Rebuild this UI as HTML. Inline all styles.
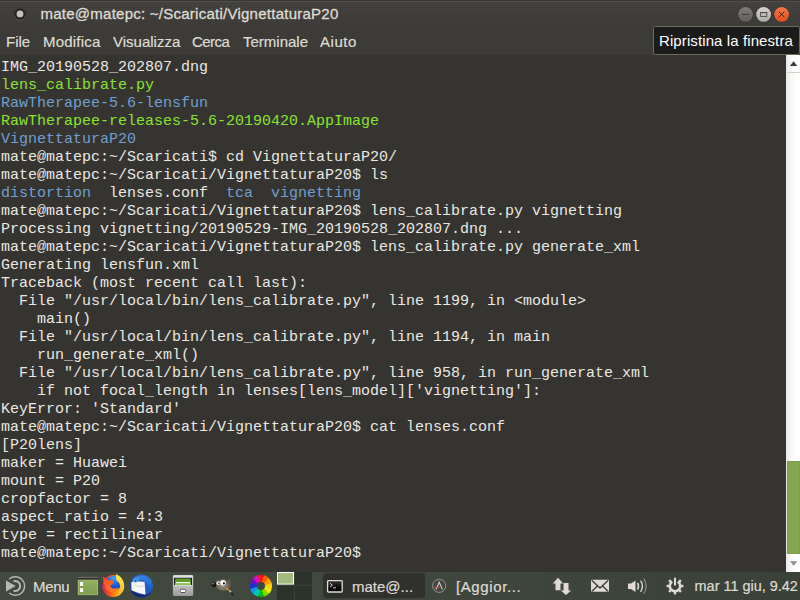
<!DOCTYPE html>
<html>
<head>
<meta charset="utf-8">
<title>mate@matepc: ~/Scaricati/VignettaturaP20</title>
<style>
html,body{margin:0;padding:0;}
body{width:800px;height:600px;overflow:hidden;position:relative;background:#353431;font-family:"Liberation Sans",sans-serif;}
.abs{position:absolute;}
#titlebar{left:0;top:0;width:800px;height:28px;background:linear-gradient(#393834 0,#393834 1px,#43423e 2px,#3c3b37 27px);}
#titlebar .topline{left:0;top:1px;width:800px;height:1px;background:#504f4a;}
#title{left:40.5px;top:5px;font-size:15px;letter-spacing:0.25px;-webkit-text-stroke:0.3px #dfdbd2;line-height:17px;color:#dfdbd2;white-space:nowrap;}
#menubar{left:0;top:28px;width:800px;height:27px;background:#3c3b37;}
.mi{top:33px;font-size:15px;line-height:17px;color:#dfdbd2;white-space:nowrap;-webkit-text-stroke:0.2px #dfdbd2;}
#term{left:0;top:55px;width:786px;height:517px;background:#353431;}
#text{left:1px;top:59px;margin:0;font-family:"Liberation Mono",monospace;font-size:15px;line-height:18px;color:#ebe8e2;white-space:pre;}
.g{color:#8ae234;}
.b{color:#729fcf;}
#scroll{left:786px;top:55px;width:14px;height:517px;background:linear-gradient(90deg,#e9e8e6,#f7f7f6 35%,#ffffff 75%);}
#thumb{left:787px;top:461px;width:13px;height:93px;background:#85a651;box-shadow:inset 0 0 0 1px #7c9d4a;}
#panel{left:0;top:572px;width:800px;height:28px;background:linear-gradient(#444c40,#3a4137);}
.pt{font-size:15px;line-height:17px;color:#dfdbd2;white-space:nowrap;-webkit-text-stroke:0.2px #dfdbd2;}
#tooltip{left:653px;top:26px;width:145px;height:27px;background:#1b1b1b;border:1px solid #706b5b;border-radius:2.5px;}
#tiptext{left:659px;top:32px;font-size:15px;letter-spacing:0.1px;line-height:17px;color:#ffffff;white-space:nowrap;}
</style>
</head>
<body>
<div id="titlebar" class="abs"><div class="abs topline"></div></div>
<svg class="abs" style="left:10px;top:4px" width="20" height="20" viewBox="10 4 20 20"><defs><radialGradient id="dotg"><stop offset="0.7" stop-color="#262522"/><stop offset="1" stop-color="#353430"/></radialGradient></defs><circle cx="20" cy="14.5" r="6.3" fill="#56554f"/><circle cx="20" cy="13.9" r="6.2" fill="url(#dotg)"/><circle cx="20" cy="13.9" r="3.4" fill="#c4c1ba"/></svg>
<div id="title" class="abs">mate@matepc: ~/Scaricati/VignettaturaP20</div>
<!-- window buttons -->
<svg class="abs" style="left:732px;top:0px" width="64" height="30" viewBox="732 0 64 30">
  <defs>
    <linearGradient id="gb" x1="0" y1="0" x2="0" y2="1"><stop offset="0" stop-color="#7f7e78"/><stop offset="1" stop-color="#5e5d58"/></linearGradient>
    <linearGradient id="gm" x1="0" y1="0" x2="0" y2="1"><stop offset="0" stop-color="#d6d5d2"/><stop offset="1" stop-color="#acaba6"/></linearGradient>
    <linearGradient id="gc" x1="0" y1="0" x2="0" y2="1"><stop offset="0" stop-color="#f27a4c"/><stop offset="1" stop-color="#dd4f1c"/></linearGradient>
  </defs>
  <circle cx="745.5" cy="14.5" r="8" fill="#353430"/>
  <circle cx="745.5" cy="14.4" r="7.4" fill="url(#gb)"/>
  <rect x="742" y="13.9" width="7" height="1" fill="#3d3c38"/>
  <circle cx="763.6" cy="14.5" r="8" fill="#353430"/>
  <circle cx="763.6" cy="14.4" r="7.4" fill="url(#gm)"/>
  <rect x="760.6" y="12.6" width="6.2" height="3.8" fill="none" stroke="#4b4a46" stroke-width="0.9"/>
  <rect x="760.2" y="12.1" width="7" height="1" fill="#4b4a46"/>
  <circle cx="781.6" cy="14.5" r="8" fill="#353430"/>
  <circle cx="781.6" cy="14.4" r="7.4" fill="url(#gc)"/>
  <path d="M778.8 11.6 L784.4 17.2 M784.4 11.6 L778.8 17.2" stroke="#4a2010" stroke-width="1"/>
</svg>
<div id="menubar" class="abs"></div>
<div class="abs mi" style="left:6px">File</div>
<div class="abs mi" style="left:43px;letter-spacing:0.2px">Modifica</div>
<div class="abs mi" style="left:113px">Visualizza</div>
<div class="abs mi" style="left:192px;letter-spacing:-0.55px">Cerca</div>
<div class="abs mi" style="left:243px">Terminale</div>
<div class="abs mi" style="left:320px;letter-spacing:0.55px">Aiuto</div>
<div id="term" class="abs"></div>
<pre id="text" class="abs">IMG_20190528_202807.dng
<span class="g">lens_calibrate.py</span>
<span class="b">RawTherapee-5.6-lensfun</span>
<span class="g">RawTherapee-releases-5.6-20190420.AppImage</span>
<span class="b">VignettaturaP20</span>
mate@matepc:~/Scaricati$ cd VignettaturaP20/
mate@matepc:~/Scaricati/VignettaturaP20$ ls
<span class="b">distortion</span>  lenses.conf  <span class="b">tca</span>  <span class="b">vignetting</span>
mate@matepc:~/Scaricati/VignettaturaP20$ lens_calibrate.py vignetting
Processing vignetting/20190529-IMG_20190528_202807.dng ...
mate@matepc:~/Scaricati/VignettaturaP20$ lens_calibrate.py generate_xml
Generating lensfun.xml
Traceback (most recent call last):
  File "/usr/local/bin/lens_calibrate.py", line 1199, in &lt;module&gt;
    main()
  File "/usr/local/bin/lens_calibrate.py", line 1194, in main
    run_generate_xml()
  File "/usr/local/bin/lens_calibrate.py", line 958, in run_generate_xml
    if not focal_length in lenses[lens_model]['vignetting']:
KeyError: 'Standard'
mate@matepc:~/Scaricati/VignettaturaP20$ cat lenses.conf
[P20lens]
maker = Huawei
mount = P20
cropfactor = 8
aspect_ratio = 4:3
type = rectilinear
mate@matepc:~/Scaricati/VignettaturaP20$ </pre>
<div id="scroll" class="abs"></div>
<div id="thumb" class="abs"></div>
<svg class="abs" style="left:786px;top:55px" width="14" height="517" viewBox="786 55 14 517">
  <path d="M793.6 61.2 L797.3 66 L789.9 66 Z" fill="#3c3c3c"/>
  <rect x="787" y="72" width="13" height="1" fill="#d4cfc9"/>
  <path d="M790 561.2 L797.3 561.2 L793.6 565.8 Z" fill="#8e8e8c"/>
</svg>
<svg class="abs" style="left:0;top:572px" width="800" height="28" viewBox="0 572 800 28">
  <defs>
    <linearGradient id="pgr" x1="0" y1="0" x2="1" y2="0"><stop offset="0" stop-color="#424a3f"/><stop offset="0.6" stop-color="#3f473c"/><stop offset="1" stop-color="#3a4138"/></linearGradient>
    <linearGradient id="cajag" x1="0" y1="0" x2="0" y2="1"><stop offset="0" stop-color="#93b061"/><stop offset="1" stop-color="#7f9d50"/></linearGradient>
    <linearGradient id="cabg" x1="0" y1="0" x2="0" y2="1"><stop offset="0" stop-color="#d0d0d0"/><stop offset="0.5" stop-color="#c0c0c0"/><stop offset="1" stop-color="#9a9a9a"/></linearGradient>
    <linearGradient id="ffg" x1="0" y1="0.45" x2="1" y2="0.55"><stop offset="0" stop-color="#e01c62"/><stop offset="0.28" stop-color="#fb3f2c"/><stop offset="0.6" stop-color="#ff8c14"/><stop offset="1" stop-color="#ffd22e"/></linearGradient>
    <linearGradient id="ffy" x1="0" y1="0" x2="0" y2="1"><stop offset="0" stop-color="#fff04a"/><stop offset="1" stop-color="#ffb11c"/></linearGradient>
    <radialGradient id="ffb" cx="0.5" cy="0.15" r="0.85"><stop offset="0" stop-color="#3aa4ff"/><stop offset="0.55" stop-color="#1f62e6"/><stop offset="1" stop-color="#1a2cc0"/></radialGradient>
    <linearGradient id="ffo" x1="0" y1="0" x2="1" y2="1"><stop offset="0" stop-color="#ff4a2a"/><stop offset="1" stop-color="#ff8a18"/></linearGradient>
    <linearGradient id="tbw" x1="0" y1="0" x2="1" y2="1"><stop offset="0" stop-color="#3d8ee2"/><stop offset="0.6" stop-color="#2a6fd2"/><stop offset="1" stop-color="#173f9c"/></linearGradient>
    <linearGradient id="tbg" x1="0" y1="1" x2="1" y2="0"><stop offset="0" stop-color="#101f66"/><stop offset="0.5" stop-color="#1f55bf"/><stop offset="1" stop-color="#2f7bd8"/></linearGradient>
    <linearGradient id="termg" x1="0" y1="0" x2="0" y2="1"><stop offset="0" stop-color="#3a3a3a"/><stop offset="0.6" stop-color="#050505"/></linearGradient>
    <radialGradient id="gimpg" cx="0.45" cy="0.6" r="0.6"><stop offset="0" stop-color="#969080"/><stop offset="1" stop-color="#5c5646"/></radialGradient>
  </defs>
  <rect x="0" y="572" width="800" height="28" fill="url(#pgr)"/>
  <!-- menu icon -->
  <g fill="none" stroke="#b6b6b2" stroke-width="1.5">
    <path d="M9.2 579 A9.3 9.3 0 1 1 9.2 593"/>
    <path d="M13.5 581.3 A5 5 0 1 1 13.5 590.7" stroke-width="2"/>
  </g>
  <path d="M6 580.5 L15.8 586 L6 591.5 Z" fill="#b6b6b2"/>
  <!-- caja -->
  <rect x="77.8" y="576.9" width="20.3" height="1.2" fill="#6b6962"/>
  <rect x="77.8" y="578" width="20.3" height="1.8" fill="#2f2e2b"/>
  <rect x="77.8" y="579.7" width="20.3" height="15.4" fill="#a0bc72"/>
  <rect x="78.6" y="580.4" width="18.7" height="14" fill="url(#cajag)"/>
  <rect x="79.4" y="581.5" width="4.4" height="5" fill="#7b9a4a"/>
  <rect x="79.4" y="587.6" width="4.4" height="5" fill="#7b9a4a"/>
  <rect x="79.9" y="582" width="3.3" height="4" fill="#f6f6f6"/>
  <rect x="79.9" y="588.1" width="3.3" height="4" fill="#f6f6f6"/>
  <!-- firefox -->
  <circle cx="113.2" cy="586" r="10.9" fill="url(#ffg)"/>
  <path d="M102.8 576.6 L108.4 579.4 L104 584 Z" fill="#f2452f"/>
  <circle cx="113.7" cy="583.2" r="7.5" fill="url(#ffb)"/>
  <path d="M103.8 578.2 Q107 580.6 109.6 580.2 Q111 579.2 112.6 579.6 Q112 581.4 113.4 582.6 Q113 584.4 110.6 585 Q110 587 112 588.2 Q115 589.4 118.4 587.2 Q117.6 591.6 113 592.4 Q107.6 592.4 105.4 588 Q103.4 583.4 103.8 578.2 Z" fill="url(#ffo)"/>
  <path d="M116.4 574 Q124.8 578.6 124.2 588 Q122.4 595 115 596.6 Q120.8 592.4 120.4 586.4 Q119.8 582.6 116.6 580.6 Q115.2 577.4 116.4 574 Z" fill="url(#ffy)"/>
  <!-- thunderbird -->
  <circle cx="141.3" cy="586" r="11.5" fill="url(#tbg)"/>
  <path d="M133 578.2 Q140 573.6 147.6 577 Q153.6 581.6 152.6 589 Q151.4 593.8 147.6 596 Q150.4 590 148.4 584.4 Q144.6 578.6 136 579.6 Z" fill="url(#tbw)"/>
  <ellipse cx="135.8" cy="580.6" rx="3.4" ry="2.6" fill="#4d97e0"/>
  <circle cx="135.7" cy="580.6" r="0.7" fill="#14245e"/>
  <path d="M131.3 582.6 Q133 581 135 582.8 Q139.6 580.6 144.6 582 L145.6 594.8 Q138 593.4 131.4 590.2 Z" fill="#f5f5f7"/>
  <path d="M134.6 583.6 Q137 588.2 145 585.6" fill="none" stroke="#c2c5ce" stroke-width="0.7"/>
  <path d="M130.6 591 Q136 597.6 144 597.2 Q149 596 151.6 591.6 Q148.6 594.6 144 595 Q137 595 130.6 591 Z" fill="#15246e"/>
  <!-- cabinet -->
  <rect x="172.9" y="575" width="20.3" height="21" rx="1.4" fill="url(#cabg)"/>
  <rect x="173.4" y="575.4" width="19.3" height="2.2" rx="1" fill="#dedede"/>
  <rect x="174" y="577.8" width="18" height="7.2" fill="#1e1f1c"/>
  <path d="M175.6 578.6 L190 578.6 L190.9 580 L190.9 585 L175 585 L175 580 Z" fill="#5f9a2a"/>
  <rect x="175" y="583.2" width="15.9" height="1.9" fill="#8cc152"/>
  <rect x="176" y="582" width="14" height="1.2" fill="#f4f8ee"/>
  <rect x="173.6" y="585.2" width="18.9" height="0.8" fill="#d8d8d8"/>
  <rect x="179.2" y="588.3" width="7.6" height="4.9" rx="1" fill="#c9c9c9"/>
  <rect x="180.2" y="589.2" width="5.6" height="3.3" rx="0.9" fill="#fafafa" stroke="#4e4e4e" stroke-width="1"/>
  <!-- gimp -->
  <path d="M226.4 581 Q229.4 580 230.5 577.2 Q231.6 582 230 586.4 Z" fill="#5f5949"/>
  <path d="M216 579.4 L219 580.6 L216.6 583 Z" fill="#5f5949"/>
  <ellipse cx="223.3" cy="584.9" rx="7.4" ry="5.9" fill="url(#gimpg)"/>
  <ellipse cx="213.9" cy="584.6" rx="2.4" ry="2.6" fill="#161616"/>
  <circle cx="213.2" cy="583.6" r="0.9" fill="#9a9a9a"/>
  <circle cx="218.3" cy="583.2" r="1.9" fill="#f0f0f0"/>
  <circle cx="223" cy="582.7" r="2.8" fill="#f8f8f8"/>
  <circle cx="218.9" cy="583.4" r="0.8" fill="#222"/>
  <circle cx="223.9" cy="583.4" r="1.1" fill="#1a1a1a"/>
  <path d="M225.8 588.1 L229.4 590.5" stroke="#e08a30" stroke-width="1.5"/>
  <path d="M229.4 590.5 L231.4 592.4" stroke="#c8c8c8" stroke-width="1.4"/>
  <path d="M231.2 592.2 L233.4 595.4" stroke="#262626" stroke-width="1.7"/>
  <!-- workspace switcher -->
  <rect x="277" y="572" width="35" height="28" fill="#2b3229"/>
  <rect x="294" y="572" width="1" height="28" fill="#394137"/>
  <rect x="277" y="584.6" width="35" height="1.3" fill="#394137"/>
  <rect x="277.5" y="572.5" width="16" height="11.6" fill="#a3ba80" stroke="#ffffff" stroke-width="1"/>
  <!-- task button -->
  <rect x="323" y="573" width="102" height="25.2" rx="3.5" fill="#30302d"/>
  <rect x="327.6" y="580.6" width="14.6" height="11.4" rx="0.8" fill="url(#termg)" stroke="#dcdcd8" stroke-width="1.3"/>
  <path d="M330 583.2 L332.4 585.2 L330 587.2" fill="none" stroke="#e8e8e8" stroke-width="0.9"/>
  <rect x="333" y="587.4" width="3" height="0.9" fill="#e8e8e8"/>
  <!-- update manager -->
  <circle cx="439.2" cy="585.8" r="6.6" fill="#444541" stroke="#9c9c98" stroke-width="0.9"/>
  <path d="M436 589.5 L439.2 582.2 L442.4 589.5" fill="none" stroke="#c9c9c5" stroke-width="1.1"/>
  <rect x="434.8" y="586.6" width="4.8" height="1.1" fill="#e2571e"/>
  <!-- network -->
  <g fill="#dfdbd2">
    <path d="M558 577.8 L563.2 583.4 L560.5 583.4 L560.5 590.2 L555.5 590.2 L555.5 583.4 L552.8 583.4 Z"/>
    <path d="M566 594.9 L560.8 590.4 L563.5 590.4 L563.5 583 L568.5 583 L568.5 590.4 L571.2 590.4 Z"/>
    <!-- mail -->
    <rect x="591" y="579.8" width="18" height="12" rx="1.2"/>
    <!-- volume -->
    <path d="M628 583.6 L631 583.6 L635.5 580.4 L635.5 592 L631 588.9 L628 588.9 Z"/>
  </g>
  <path d="M592 580.6 L600 588 L608 580.6 M592 591.2 L597.4 586 M608 591.2 L602.6 586" fill="none" stroke="#333a31" stroke-width="1.3"/>
  <g fill="none" stroke-linecap="butt">
    <path d="M637.5 583 Q639.6 586.2 637.5 589.4" stroke="#dfdbd2" stroke-width="1.4"/>
    <path d="M640.6 580.6 Q644.4 586.2 640.6 591.8" stroke="#dfdbd2" stroke-width="1.4"/>
    <path d="M643.8 578.6 Q648.6 586.2 643.8 593.8" stroke="#8d8f88" stroke-width="1.2"/>
  </g>
  <!-- power gear -->
  <g fill="none" stroke="#dfdbd2">
    <path d="M672.24 581.59 A5.2 5.2 0 1 0 677.76 581.59" stroke-width="2.5"/>
    <path d="M675 577.8 L675 585.6" stroke-width="2"/>
    <g stroke-width="2.4">
      <path d="M678.96 582.04 L680.94 580.06"/>
      <path d="M680.60 586.00 L683.40 586.00"/>
      <path d="M678.96 589.96 L680.94 591.94"/>
      <path d="M675.00 591.60 L675.00 594.40"/>
      <path d="M671.04 589.96 L669.06 591.94"/>
      <path d="M669.40 586.00 L666.60 586.00"/>
      <path d="M671.04 582.04 L669.06 580.06"/>
    </g>
  </g>
</svg>
<div class="abs" style="left:250.2px;top:575.2px;width:21.6px;height:21.6px;border-radius:50%;background:conic-gradient(#ff1414 0deg 15deg,#ff6a00 15deg 45deg,#ffa200 45deg 75deg,#ffd600 75deg 105deg,#f0ee00 105deg 135deg,#86d400 135deg 165deg,#00bc10 165deg 195deg,#00c8b0 195deg 225deg,#0a9ae6 225deg 255deg,#1a34c4 255deg 285deg,#6416c2 285deg 315deg,#e010b8 315deg 345deg,#ff1414 345deg 360deg);"></div>
<div class="abs" style="left:256.8px;top:581.8px;width:8.4px;height:8.4px;border-radius:50%;background:#40483d;"></div>
<div class="abs pt" style="left:33px;top:578px;letter-spacing:-0.3px">Menu</div>
<div class="abs pt" id="t1" style="left:352px;top:578px">mate@...</div>
<div class="abs pt" id="t2" style="left:456px;top:578px;letter-spacing:0.6px">[Aggior...</div>
<div class="abs pt" id="clock" style="left:694.6px;top:577.5px;font-size:14.45px">mar 11 giu, 9.42</div>
<div id="tooltip" class="abs"></div>
<div id="tiptext" class="abs">Ripristina la finestra</div>
</body>
</html>
